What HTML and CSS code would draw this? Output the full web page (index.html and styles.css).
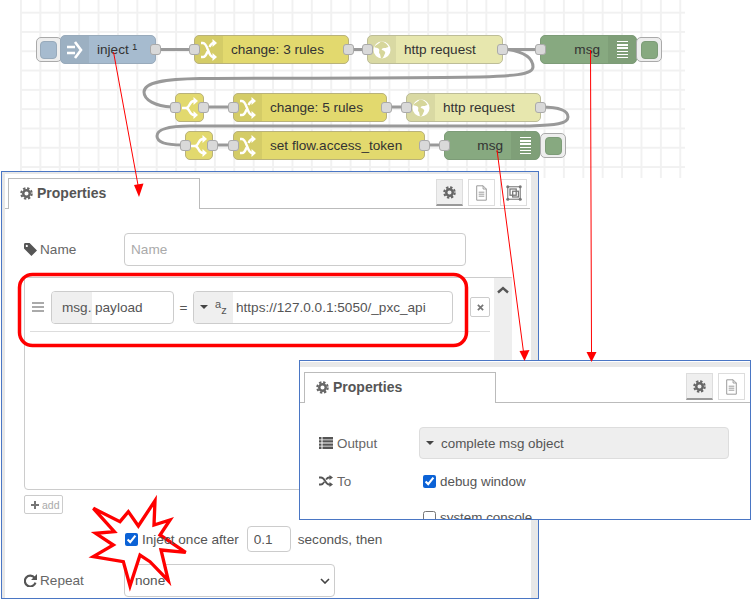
FILE: index.html
```html
<!DOCTYPE html>
<html lang="en">

<head>
    <meta charset="UTF-8">
    <title>Node-RED flow with inject and debug properties</title>
    <link rel="stylesheet" href="styles.css">
</head>

<body>

    <svg class="defs" width="0" height="0">
        <symbol id="cog" viewBox="0 0 16 16">
            <circle cx="8" cy="8" r="4" fill="none" stroke="currentColor" stroke-width="3" />
            <circle cx="8" cy="8" r="6.4" fill="none" stroke="currentColor" stroke-width="2.6" stroke-dasharray="2.9 2.13" />
        </symbol>
        <symbol id="doc" viewBox="0 0 16 20">
            <path d="M2 1h8l4 4v14H2z M10 1v4h4" fill="none" stroke="currentColor" stroke-width="1.2" />
            <path d="M4.5 9h7M4.5 11.5h7M4.5 14h7" stroke="currentColor" stroke-width="1.2" />
        </symbol>
        <symbol id="frame" viewBox="0 0 18 18">
            <rect x="2" y="2" width="14" height="14" fill="none" stroke="currentColor" stroke-width="1.2" />
            <rect x="4.5" y="4.5" width="7" height="7" fill="none" stroke="currentColor" stroke-width="1.4" />
            <rect x="7.5" y="7" width="6.5" height="6.5" fill="none" stroke="currentColor" stroke-width="1.4" />
            <circle cx="2" cy="2" r="1.7" fill="currentColor" />
            <circle cx="16" cy="2" r="1.7" fill="currentColor" />
            <circle cx="2" cy="16" r="1.7" fill="currentColor" />
            <circle cx="16" cy="16" r="1.7" fill="currentColor" />
        </symbol>
        <symbol id="shuffle" viewBox="0 0 16 22">
            <path d="M0 4h2c5 0 5 14 10 14h1M0 18h2c2.200 0 3.500-2.600 4.500-5.500M8.500 8c1-2 2-4 4-4h.5" fill="none" stroke="#fff" stroke-width="2.400" />
            <path d="M11.500 0 16 4l-4.500 4zM11.500 14l4.500 4-4.500 4z" fill="#fff" />
        </symbol>
        <symbol id="fork" viewBox="0 0 16 22">
            <path d="M0 11h4c4 0 3-7 8-7h1M4 11c4 0 3 7 8 7h1" fill="none" stroke="#fff" stroke-width="2.400" />
            <path d="M11.500 0 16 4l-4.500 4zM11.500 14l4.500 4-4.500 4z" fill="#fff" />
        </symbol>
        <symbol id="globe" viewBox="0 0 18 18">
            <circle cx="9" cy="9" r="8.500" fill="#fff" />
            <path d="M8 .5C6 3 3 3.500 1 6c1.500 1 4 .5 5 2 1 2-1 3.500 1 5l1 4.500c2 .5 3-3 4-5 1-1.500-1-3-3-3.500-1-1 .5-2 2-2 2 .5 3-1 4.500-1C14.500 3 11 .5 8 .5z" fill="#d6d69a" />
        </symbol>
        <symbol id="tag" viewBox="0 0 14 14">
            <path d="M0 1.500Q0 0 1.500 0H6l8 8-6 6-8-8zM3 2a1.200 1.200 0 1 0 .01 0z" fill="currentColor" fill-rule="evenodd" />
        </symbol>
        <symbol id="list" viewBox="0 0 14 12">
            <path d="M0 0h2.500v2.400H0zM0 3.200h2.500v2.400H0zM0 6.400h2.500v2.400H0zM0 9.600h2.500V12H0zM3.500 0H14v2.400H3.500zM3.500 3.200H14v2.400H3.500zM3.500 6.400H14v2.400H3.500zM3.500 9.600H14V12H3.500z" fill="currentColor" />
        </symbol>
        <symbol id="random" viewBox="0 0 14 12">
            <path d="M0 2.500h2c4 0 4.500 7 8 7h1M0 9.500h2c1.500 0 2.500-1.200 3.200-2.600M7 4.500c.8-1 1.700-2 3-2h1" fill="none" stroke="currentColor" stroke-width="1.800" />
            <path d="M10.500 0 14 2.500 10.500 5zM10.500 7 14 9.500 10.500 12z" fill="currentColor" />
        </symbol>
        <symbol id="repeat" viewBox="0 0 12 12">
            <path d="M9.800 3.500A5 5 0 1 0 10.600 8" fill="none" stroke="currentColor" stroke-width="2" />
            <path d="M12 0v5.500H6.500z" fill="currentColor" />
        </symbol>
    </svg>

    <div class="stage">

        <div class="grid"></div>

        <svg class="wires" width="751" height="180">
            <path d="M161 49.500H189M353 49.500H367M503 49.500H540" />
            <path d="M505 49C528 52 533 60 533 67C533 75 510 76 480 77C380 78.500 250 78 200 78.500C165 79 144 82 144 92C144 100 155 106 172 107" />
            <path d="M204 107H233M387 107H406" />
            <path d="M541 107C558 107 568 110 568 117C568 124 555 125 530 126L190 126C165 126 157 130 157 136C157 143 168 145 182 145" />
            <path d="M213 145H233M425 145H444" />
        </svg>

        <!-- row 1 -->
        <div class="node-btn btn-inject"><span></span></div>
        <div class="node inject n-inject">
            <div class="node-icon">
                <svg width="16" height="20" viewBox="0 0 16 20">
                    <path d="M0 7h8M0 13h8M8 2l6 8-6 8" fill="none" stroke="#fff" stroke-width="2.600" />
                </svg>
            </div>
            <div class="node-label">inject ¹</div>
            <i class="port right"></i>
        </div>
        <div class="node change n-change3">
            <i class="port left"></i>
            <div class="node-icon"><svg class="ic-node"><use href="#shuffle" /></svg></div>
            <div class="node-label">change: 3 rules</div>
            <i class="port right"></i>
        </div>
        <div class="node http n-http1">
            <i class="port left"></i>
            <div class="node-icon"><svg class="ic-globe"><use href="#globe" /></svg></div>
            <div class="node-label">http request</div>
            <i class="port right"></i>
        </div>
        <div class="node debug n-msg1">
            <i class="port left"></i>
            <div class="node-label">msg</div>
            <div class="node-icon"><div class="bars"></div></div>
        </div>
        <div class="node-btn btn-msg1"><span></span></div>

        <!-- row 2 -->
        <div class="node change n-switch1">
            <i class="port left"></i>
            <div class="node-icon solo"><svg class="ic-node"><use href="#fork" /></svg></div>
            <i class="port right"></i>
        </div>
        <div class="node change n-change5">
            <i class="port left"></i>
            <div class="node-icon"><svg class="ic-node"><use href="#shuffle" /></svg></div>
            <div class="node-label">change: 5 rules</div>
            <i class="port right"></i>
        </div>
        <div class="node http n-http2">
            <i class="port left"></i>
            <div class="node-icon"><svg class="ic-globe"><use href="#globe" /></svg></div>
            <div class="node-label">http request</div>
            <i class="port right"></i>
        </div>

        <!-- row 3 -->
        <div class="node change n-switch2">
            <i class="port left"></i>
            <div class="node-icon solo"><svg class="ic-node"><use href="#fork" /></svg></div>
            <i class="port right"></i>
        </div>
        <div class="node change n-set">
            <i class="port left"></i>
            <div class="node-icon"><svg class="ic-node"><use href="#shuffle" /></svg></div>
            <div class="node-label">set flow.access_token</div>
            <i class="port right"></i>
        </div>
        <div class="node debug n-msg2">
            <i class="port left"></i>
            <div class="node-label">msg</div>
            <div class="node-icon"><div class="bars"></div></div>
        </div>
        <div class="node-btn btn-msg2"><span></span></div>

        <!-- inject dialog -->
        <div class="window win-inject">
            <div class="tabbar">
                <div class="tab"><svg class="ic-cog"><use href="#cog" /></svg>Properties</div>
                <div class="tab-buttons">
                    <div class="tab-btn active"><svg class="ic-cog"><use href="#cog" /></svg></div>
                    <div class="tab-btn"><svg class="ic-doc"><use href="#doc" /></svg></div>
                    <div class="tab-btn"><svg class="ic-frame"><use href="#frame" /></svg></div>
                </div>
            </div>
            <div class="form">
                <div class="form-row">
                    <label class="form-label"><svg class="ic-label"><use href="#tag" /></svg>Name</label>
                    <input class="text-input name-input" type="text" placeholder="Name">
                </div>

                <div class="prop-list">
                    <div class="prop-main">
                        <div class="prop-row">
                            <div class="handle"></div>
                            <div class="typed msg-field">
                                <span class="typed-type msg-type">msg.</span>
                                <span class="typed-value">payload</span>
                            </div>
                            <span class="equals">=</span>
                            <div class="typed url-field">
                                <span class="typed-type str-type"><i class="caret"></i><span class="az">a<sub>z</sub></span></span>
                                <span class="typed-value">https://127.0.0.1:5050/_pxc_api</span>
                            </div>
                            <div class="remove">
                                <svg width="7" height="7" viewBox="0 0 8 8"><path d="M1 1l6 6M7 1L1 7" stroke="#777" stroke-width="2" /></svg>
                            </div>
                        </div>
                    </div>
                    <div class="list-scroll">
                        <svg width="12" height="8" viewBox="0 0 12 8"><path d="M1 6.500 6 2l5 4.500" fill="none" stroke="#555" stroke-width="2.400" /></svg>
                    </div>
                </div>

                <div class="add-btn">
                    <svg width="8" height="8" viewBox="0 0 8 8"><path d="M4 0v8M0 4h8" stroke="#777" stroke-width="2" /></svg>
                    <span>add</span>
                </div>

                <div class="once-row">
                    <input class="check over" type="checkbox" checked>
                    <span class="over once-text">Inject once after</span>
                    <input class="text-input delay-input over" type="text" value="0.1">
                    <span class="seconds">seconds, then</span>
                </div>

                <div class="form-row repeat-row">
                    <label class="form-label"><svg class="ic-label"><use href="#repeat" /></svg>Repeat</label>
                    <div class="select-box">
                        <span class="over">none</span>
                        <svg width="10" height="6" viewBox="0 0 10 6"><path d="M1 1l4 4 4-4" fill="none" stroke="#444" stroke-width="1.600" /></svg>
                    </div>
                </div>
            </div>

            <svg class="star" width="110" height="110" viewBox="0 0 330 330">
                <polygon points="25,55 105,95 130,65 160,108 210,32 207,105 255,90 225,135 302,187 228,180 250,272 195,215 165,195 135,288 115,215 25,200 85,165 32,130 88,125" />
            </svg>
            <div class="win-scroll"></div>
        </div>

        <!-- debug dialog -->
        <div class="window win-debug">
            <div class="tabbar">
                <div class="tab"><svg class="ic-cog"><use href="#cog" /></svg>Properties</div>
                <div class="tab-buttons">
                    <div class="tab-btn active"><svg class="ic-cog"><use href="#cog" /></svg></div>
                    <div class="tab-btn"><svg class="ic-doc"><use href="#doc" /></svg></div>
                </div>
            </div>
            <div class="form">
                <div class="form-row">
                    <label class="form-label"><svg class="ic-label wide"><use href="#list" /></svg>Output</label>
                    <div class="output-select"><i class="caret"></i>complete msg object</div>
                </div>
                <div class="form-row check-row">
                    <label class="form-label"><svg class="ic-label wide"><use href="#random" /></svg>To</label>
                    <input class="check" type="checkbox" checked>
                    <span>debug window</span>
                </div>
                <div class="form-row check-row">
                    <span class="form-label"></span>
                    <input class="check" type="checkbox">
                    <span>system console</span>
                </div>
            </div>
        </div>

        <!-- annotations -->
        <svg class="notes" width="751" height="600">
            <path d="M113.500 52 138 185M590.500 50 591.500 352M497 150 523.500 352" />
            <polygon points="139,197 134,185 143.500,183.500" />
            <polygon points="591.500,362 586.500,352 596.500,352" />
            <polygon points="524.500,361 519.500,351 529.500,350" />
            <rect x="19.500" y="274.500" width="447" height="71" rx="13" />
        </svg>

    </div>

</body>

</html>
```

FILE: styles.css
```css
* {
    box-sizing: border-box;
}

body {
    margin: 0;
    background: #fff;
    font-family: "Liberation Sans", Arial, sans-serif;
    font-size: 13.6px;
    color: #555;
}

.defs {
    position: absolute;
}

.stage {
    position: relative;
    width: 751px;
    height: 600px;
    overflow: hidden;
}

/* workspace */
.grid {
    position: absolute;
    left: 20px;
    top: 0;
    width: 665px;
    height: 178px;
    background-image:
        linear-gradient(#f1f1f1 2px, transparent 2px),
        linear-gradient(90deg, #f1f1f1 2px, transparent 2px);
    background-size: 19.4px 19.3px;
    background-position: 0 -7.6px;
}

.wires {
    position: absolute;
    left: 0;
    top: 0;
}

.wires path {
    fill: none;
    stroke: #999;
    stroke-width: 3;
}

.node {
    position: absolute;
    display: flex;
    height: 29px;
    border: 1px solid #a9a9a0;
    border-radius: 5px;
    color: #333;
    line-height: 27px;
}

.node-icon {
    flex: none;
    width: 28px;
    display: flex;
    align-items: center;
    justify-content: center;
    background: rgba(0, 0, 0, 0.06);
    border-radius: 4px 0 0 4px;
}

.node-icon.solo {
    width: 100%;
    background: none;
}

.node-label {
    flex: 1;
    padding-left: 8px;
    white-space: nowrap;
}

.debug .node-label {
    padding: 0 8px 0 0;
    text-align: right;
}

.debug .node-icon {
    border-radius: 0 4px 4px 0;
}

.inject {
    background: #a6bbcf;
    border-color: #98aabb;
}

.change {
    background: #e2d96e;
    border-color: #b9b27a;
}

.http {
    background: #e7e7ae;
    border-color: #bdbd98;
}

.debug {
    background: #87a980;
    border-color: #7d9c78;
}

.port {
    position: absolute;
    top: 8px;
    width: 11px;
    height: 11px;
    background: #d9d9d9;
    border: 1px solid #aaa;
    border-radius: 3px;
}

.port.left {
    left: -6px;
}

.port.right {
    right: -6px;
}

.bars {
    width: 11px;
    height: 17px;
    background: repeating-linear-gradient(#fff 0 1.5px, transparent 1.5px 3.2px);
}

.ic-node {
    width: 16px;
    height: 22px;
}

.ic-globe {
    width: 18px;
    height: 18px;
}

.node-btn {
    position: absolute;
    top: 37px;
    width: 26px;
    height: 25px;
    display: flex;
    align-items: center;
    background: #eee;
    border: 1px solid #aaa;
    border-radius: 5px;
}

.node-btn span {
    width: 17px;
    height: 18px;
    border-radius: 4px;
    background: #87a980;
    border: 1px solid #7d9c78;
}

.btn-inject {
    left: 36px;
    padding-left: 3px;
}

.btn-inject span {
    background: #a6bbcf;
    border-color: #98aabb;
}

.btn-msg1 {
    left: 636px;
    justify-content: flex-end;
    padding-right: 3px;
}

.btn-msg2 {
    left: 540px;
    top: 133px;
    justify-content: flex-end;
    padding-right: 3px;
}

.n-inject { left: 60px; top: 35px; width: 96px; }
.n-change3 { left: 194px; top: 35px; width: 155px; }
.n-http1 { left: 367px; top: 35px; width: 136px; }
.n-msg1 { left: 540px; top: 35px; width: 97px; }
.n-switch1 { left: 175px; top: 93px; width: 29px; }
.n-change5 { left: 233px; top: 93px; width: 154px; }
.n-http2 { left: 406px; top: 93px; width: 135px; }
.n-switch2 { left: 185px; top: 131px; width: 28px; }
.n-set { left: 233px; top: 131px; width: 192px; }
.n-msg2 { left: 444px; top: 131px; width: 96px; }

/* dialogs */
.window {
    position: absolute;
    background: #fff;
    border: 1.5px solid #4a76c4;
    overflow: hidden;
}

.win-inject {
    left: 1px;
    top: 171px;
    width: 538px;
    height: 428px;
    padding: 2px 8px 0 3px;
    background: linear-gradient(#e8e8e8, #e8e8e8) 0 0 / 100% 3px no-repeat,
        linear-gradient(#e8e8e8, #e8e8e8) 0 0 / 3px 100% no-repeat,
        #fff;
}

.win-debug {
    left: 299px;
    top: 360px;
    width: 452px;
    height: 160px;
    padding-top: 6px;
    font-size: 13.4px;
    background: linear-gradient(#e8e8e8, #e8e8e8) 0 1px / 100% 5px no-repeat, #fff;
    z-index: 3;
}

.win-scroll {
    position: absolute;
    right: 0;
    top: 3px;
    bottom: 0;
    width: 7px;
    background: #e8e8e8;
}

.tabbar {
    display: flex;
    align-items: flex-end;
    justify-content: space-between;
    height: 35px;
    border-bottom: 1px solid #bbb;
    background: #fff;
}

.win-debug .tabbar {
    height: 36px;
}

.tab {
    display: flex;
    align-items: center;
    gap: 4px;
    width: 192px;
    height: 31px;
    margin: 0 0 -1px 3px;
    padding: 0 0 2px 11px;
    background: #fff;
    border: 1px solid #bbb;
    border-bottom: none;
    font-size: 14px;
    font-weight: bold;
    color: #555;
}

.win-debug .tab {
    margin-left: 4px;
}

.ic-cog {
    width: 13px;
    height: 13px;
    color: #666;
}

.tab-buttons {
    display: flex;
    gap: 5px;
    align-self: flex-start;
    margin: 5px 3px 0 0;
}

.win-debug .tab-buttons {
    margin: 6px 5px 0 0;
}

.tab-btn {
    display: flex;
    align-items: center;
    justify-content: center;
    width: 27px;
    height: 27px;
    border: 1px solid #ddd;
}

.tab-btn.active {
    background: #efefef;
    border-bottom: 2px solid #999;
}

.ic-doc {
    width: 13px;
    height: 16px;
    color: #999;
}

.ic-frame {
    width: 16px;
    height: 16px;
    color: #777;
}

.form {
    padding: 24px 0 0 19px;
}

.form-row {
    display: flex;
    align-items: center;
}

.form-label {
    flex: none;
    display: flex;
    align-items: center;
    gap: 3px;
    width: 100px;
    color: #666;
}

.ic-label {
    width: 13px;
    height: 13px;
    color: #555;
}

.ic-label.wide {
    width: 14px;
    height: 12px;
    margin-right: 1px;
}

.text-input {
    height: 33px;
    padding: 0 6px;
    border: 1px solid #ccc;
    border-radius: 4px;
    font: inherit;
    color: #555;
    background: #fff;
    outline: none;
}

.text-input::placeholder {
    color: #aaa;
}

.name-input {
    width: 342px;
}

/* property list */
.prop-list {
    display: flex;
    width: 488px;
    height: 213px;
    margin-top: 11px;
    border: 1px solid #ccc;
    border-radius: 0 0 4px 4px;
}

.prop-main {
    flex: 1;
    padding: 0 4px 0 5px;
}

.list-scroll {
    flex: none;
    width: 18px;
    padding: 4px 0 0 3px;
    background: #eee;
}

.prop-row {
    display: flex;
    align-items: center;
    height: 54px;
    padding: 5px 0 0 2px;
    border-bottom: 1px solid #ddd;
}

.handle {
    width: 12px;
    height: 10px;
    margin-right: 7px;
    background: repeating-linear-gradient(#aaa 0 2px, transparent 2px 4px);
}

.typed {
    display: flex;
    height: 33px;
    line-height: 31px;
    border: 1px solid #ccc;
    border-radius: 4px;
    overflow: hidden;
}

.typed-type {
    flex: none;
    display: flex;
    align-items: center;
    background: #efefef;
}

.typed-value {
    padding-left: 3px;
    white-space: nowrap;
}

.msg-field {
    width: 123px;
}

.msg-type {
    width: 40px;
    padding-left: 10px;
}

.equals {
    width: 19px;
    text-align: center;
}

.url-field {
    width: 260px;
}

.str-type {
    width: 39px;
    padding-left: 6px;
    gap: 7px;
}

.az {
    font-size: 11px;
    line-height: 1;
    margin-top: -5px;
}

.az sub {
    font-size: 11px;
    vertical-align: -6px;
    line-height: 0;
}

.caret {
    flex: none;
    width: 0;
    height: 0;
    border: 4px solid transparent;
    border-top: 4px solid #444;
    border-bottom: none;
}

.remove {
    display: flex;
    align-items: center;
    justify-content: center;
    width: 20px;
    height: 20px;
    margin-left: 17px;
    border: 1px solid #ccc;
    border-radius: 2px;
}

.add-btn {
    display: flex;
    align-items: center;
    gap: 3px;
    width: 39px;
    height: 19px;
    margin-top: 5px;
    padding-left: 6px;
    border: 1px solid #ccc;
    border-radius: 2px;
    font-size: 10.5px;
    color: #aaa;
}

.once-row {
    display: flex;
    align-items: center;
    height: 26px;
    margin-top: 12px;
    padding-left: 101px;
}

.check {
    flex: none;
    width: 13px;
    height: 13px;
    margin: 0 4px 0 0;
    accent-color: #0b62d6;
}

.over {
    position: relative;
    z-index: 2;
}

.delay-input {
    width: 44px;
    height: 26px;
    margin-left: 8px;
}

.seconds {
    margin-left: 7px;
}

.repeat-row {
    margin-top: 12px;
}

.select-box {
    display: flex;
    align-items: center;
    justify-content: space-between;
    width: 211px;
    height: 33px;
    padding: 0 4px 0 10px;
    border: 1px solid #ccc;
    border-radius: 4px;
}

.star {
    position: absolute;
    left: 83px;
    top: 318px;
    z-index: 1;
}

.star polygon {
    fill: #fff;
    stroke: #f00;
    stroke-width: 10;
}

/* debug form */
.win-debug .form {
    padding-top: 24px;
}

.output-select {
    display: flex;
    align-items: center;
    gap: 7px;
    width: 310px;
    height: 32px;
    padding-left: 6px;
    background: #eee;
    border: 1px solid #ddd;
    border-radius: 4px;
}

.check-row {
    height: 26px;
    margin-top: 9px;
}

.check-row + .check-row {
    margin-top: 10px;
}

.check-row .form-label {
    margin-right: 4px;
}

.notes {
    position: absolute;
    left: 0;
    top: 0;
    z-index: 5;
    pointer-events: none;
}

.notes path {
    fill: none;
    stroke: #f00;
    stroke-width: 1;
}

.notes polygon {
    fill: #f00;
}

.notes rect {
    fill: none;
    stroke: #f00;
    stroke-width: 3.500;
}
```
